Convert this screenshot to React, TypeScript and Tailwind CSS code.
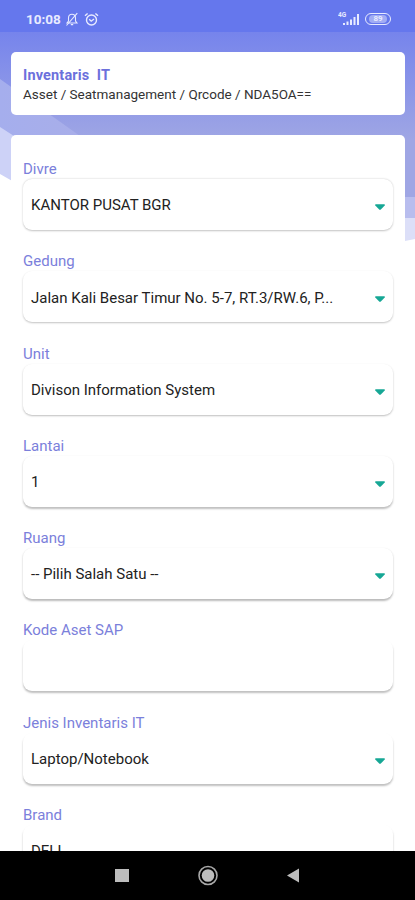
type Field = {
  label: string;
  value: string;
  select?: boolean;
  shadow: string;
};

const fields: Field[] = [
  { label: "Divre", value: "KANTOR PUSAT BGR", select: true, shadow: "shadow-[0_0.5px_2px_rgba(0,0,0,0.24)]" },
  { label: "Gedung", value: "Jalan Kali Besar Timur No. 5-7, RT.3/RW.6, P...", select: true, shadow: "shadow-[0_1px_2px_rgba(0,0,0,0.24)]" },
  { label: "Unit", value: "Divison Information System", select: true, shadow: "shadow-[0_1px_2px_rgba(0,0,0,0.26)]" },
  { label: "Lantai", value: "1", select: true, shadow: "shadow-[0_1.5px_2px_rgba(0,0,0,0.25)]" },
  { label: "Ruang", value: "-- Pilih Salah Satu --", select: true, shadow: "shadow-[0_1.5px_2px_rgba(0,0,0,0.27)]" },
  { label: "Kode Aset SAP", value: "", shadow: "shadow-[0_2px_2px_rgba(0,0,0,0.25)]" },
  { label: "Jenis Inventaris IT", value: "Laptop/Notebook", select: true, shadow: "shadow-[0_2px_2px_rgba(0,0,0,0.25)]" },
  { label: "Brand", value: "DELL", shadow: "shadow-[0_2px_2px_rgba(0,0,0,0.25)]" },
];

function Backdrop() {
  return (
    <svg className="absolute inset-0" width="415" height="250" viewBox="0 0 415 250">
      <defs>
        <linearGradient id="sky" x1="0" y1="32" x2="0" y2="140" gradientUnits="userSpaceOnUse">
          <stop offset="0" stopColor="#7684ec" />
          <stop offset="1" stopColor="#9fa6e4" />
        </linearGradient>
        <linearGradient id="band" x1="0" y1="0" x2="80" y2="0" gradientUnits="userSpaceOnUse">
          <stop offset="0" stopColor="#a5aeed" />
          <stop offset="1" stopColor="#a8aee9" />
        </linearGradient>
      </defs>
      <path d="M0 0H415V197H200V150H0Z" fill="url(#sky)" />
      <path d="M0 79L80 136V150H0Z" fill="url(#band)" />
      <path d="M0 127L14 136V182L0 174Z" fill="#cdd2f7" />
      <path d="M400 197H415V218H400Z" fill="#b8bdee" />
      <path d="M400 218H415V239L400 242Z" fill="#dcdff8" />
      <path d="M0 0H415V32H0Z" fill="#6577ed" />
    </svg>
  );
}

function StatusBar() {
  return (
    <div className="flex h-[38px] items-center justify-between pl-[26px] pr-6 text-[#e8ebff]">
      <div className="flex items-center">
        <span className="w-[39px] text-[13.5px] font-bold leading-4">10:08</span>
        <svg width="14" height="15" viewBox="0 0 14 15" fill="none" stroke="currentColor" strokeWidth="1.1">
          <path d="M2 11H12L10.5 9V6C10.5 3.5 9 2.3 7 2.3S3.5 3.5 3.5 6V9Z" />
          <path d="M5.8 12.6H8.2M12.3 1.2L1.5 13.5" />
        </svg>
        <svg className="ml-[5px]" width="15" height="15" viewBox="0 0 15 15" fill="none" stroke="currentColor" strokeWidth="1.4">
          <circle cx="7.5" cy="8" r="5" />
          <path d="M1 3.7L3.6 1.4M14 3.7L11.4 1.4M5.2 7.3L7.2 9.2L10 7" />
        </svg>
      </div>
      <div className="flex items-center gap-[5px]">
        <svg width="22" height="14" viewBox="0 0 22 14" fill="currentColor">
          <text x="0" y="5" fontSize="6.5" fontWeight="700">4G</text>
          <path d="M5 11h2v2H5zM8.5 9.5h2V13h-2zM12 7.5h2V13h-2zM15.5 5h2v8h-2zM19 2h2v11h-2z" />
        </svg>
        <span className="flex h-3 w-[26px] items-center justify-center rounded-full border-[1.5px] border-current">
          <span className="flex h-2 w-[18px] items-center justify-center rounded-full bg-white/40 text-[8px] font-bold leading-none">89</span>
        </span>
      </div>
    </div>
  );
}

function FormField({ label, value, select, shadow }: Field) {
  return (
    <div className="mb-[21.3px]">
      <div className="h-5 text-[15px] leading-[21px] text-[#7b80db]">{label}</div>
      <div className={`flex h-[51px] items-center justify-between rounded-[9px] bg-white px-2 ${shadow}`}>
        <span className="mt-[2px] whitespace-nowrap text-[15px] text-[#222]">{value}</span>
        {select && (
          <svg className="mt-[5px]" width="10" height="6" viewBox="0 0 10 6">
            <path d="M0.3 0.3H9.7V1.6L5.6 5.7H4.4L0.3 1.6Z" fill="#16a795" />
          </svg>
        )}
      </div>
    </div>
  );
}

function NavBar() {
  return (
    <div className="relative h-[49px] shrink-0 bg-black">
      <svg width="415" height="49" viewBox="0 0 415 49">
        <path d="M115 18h14v13h-14z" fill="#bdbdbd" />
        <circle cx="208" cy="24.5" r="9" fill="none" stroke="#a8a8a8" strokeWidth="1.6" />
        <circle cx="208" cy="24.5" r="6.3" fill="#bdbdbd" />
        <path d="M287 24.5L299 17.5V31.5Z" fill="#bdbdbd" />
      </svg>
    </div>
  );
}

export default function App() {
  return (
    <div className="relative flex h-[900px] w-[415px] flex-col overflow-hidden bg-white font-['Roboto',sans-serif]">
      <Backdrop />
      <div className="relative min-h-0 flex-1 overflow-hidden">
        <StatusBar />
        <header className="ml-[11px] mr-[10px] mt-[14px] h-[63px] rounded-[5px] bg-white px-3 pt-[14px]">
          <h1 className="whitespace-pre text-[14.5px] font-bold leading-[19px] tracking-[0.15px] text-[#6c70dc]">Inventaris  IT</h1>
          <p className="text-[13.5px] leading-[19px] text-[#333]">Asset / Seatmanagement / Qrcode / NDA5OA==</p>
        </header>
        <main className="ml-[11px] mr-[10px] mt-5 rounded-t-[5px] bg-white px-3 pt-6">
          {fields.map((field) => (
            <FormField key={field.label} {...field} />
          ))}
        </main>
      </div>
      <NavBar />
    </div>
  );
}
